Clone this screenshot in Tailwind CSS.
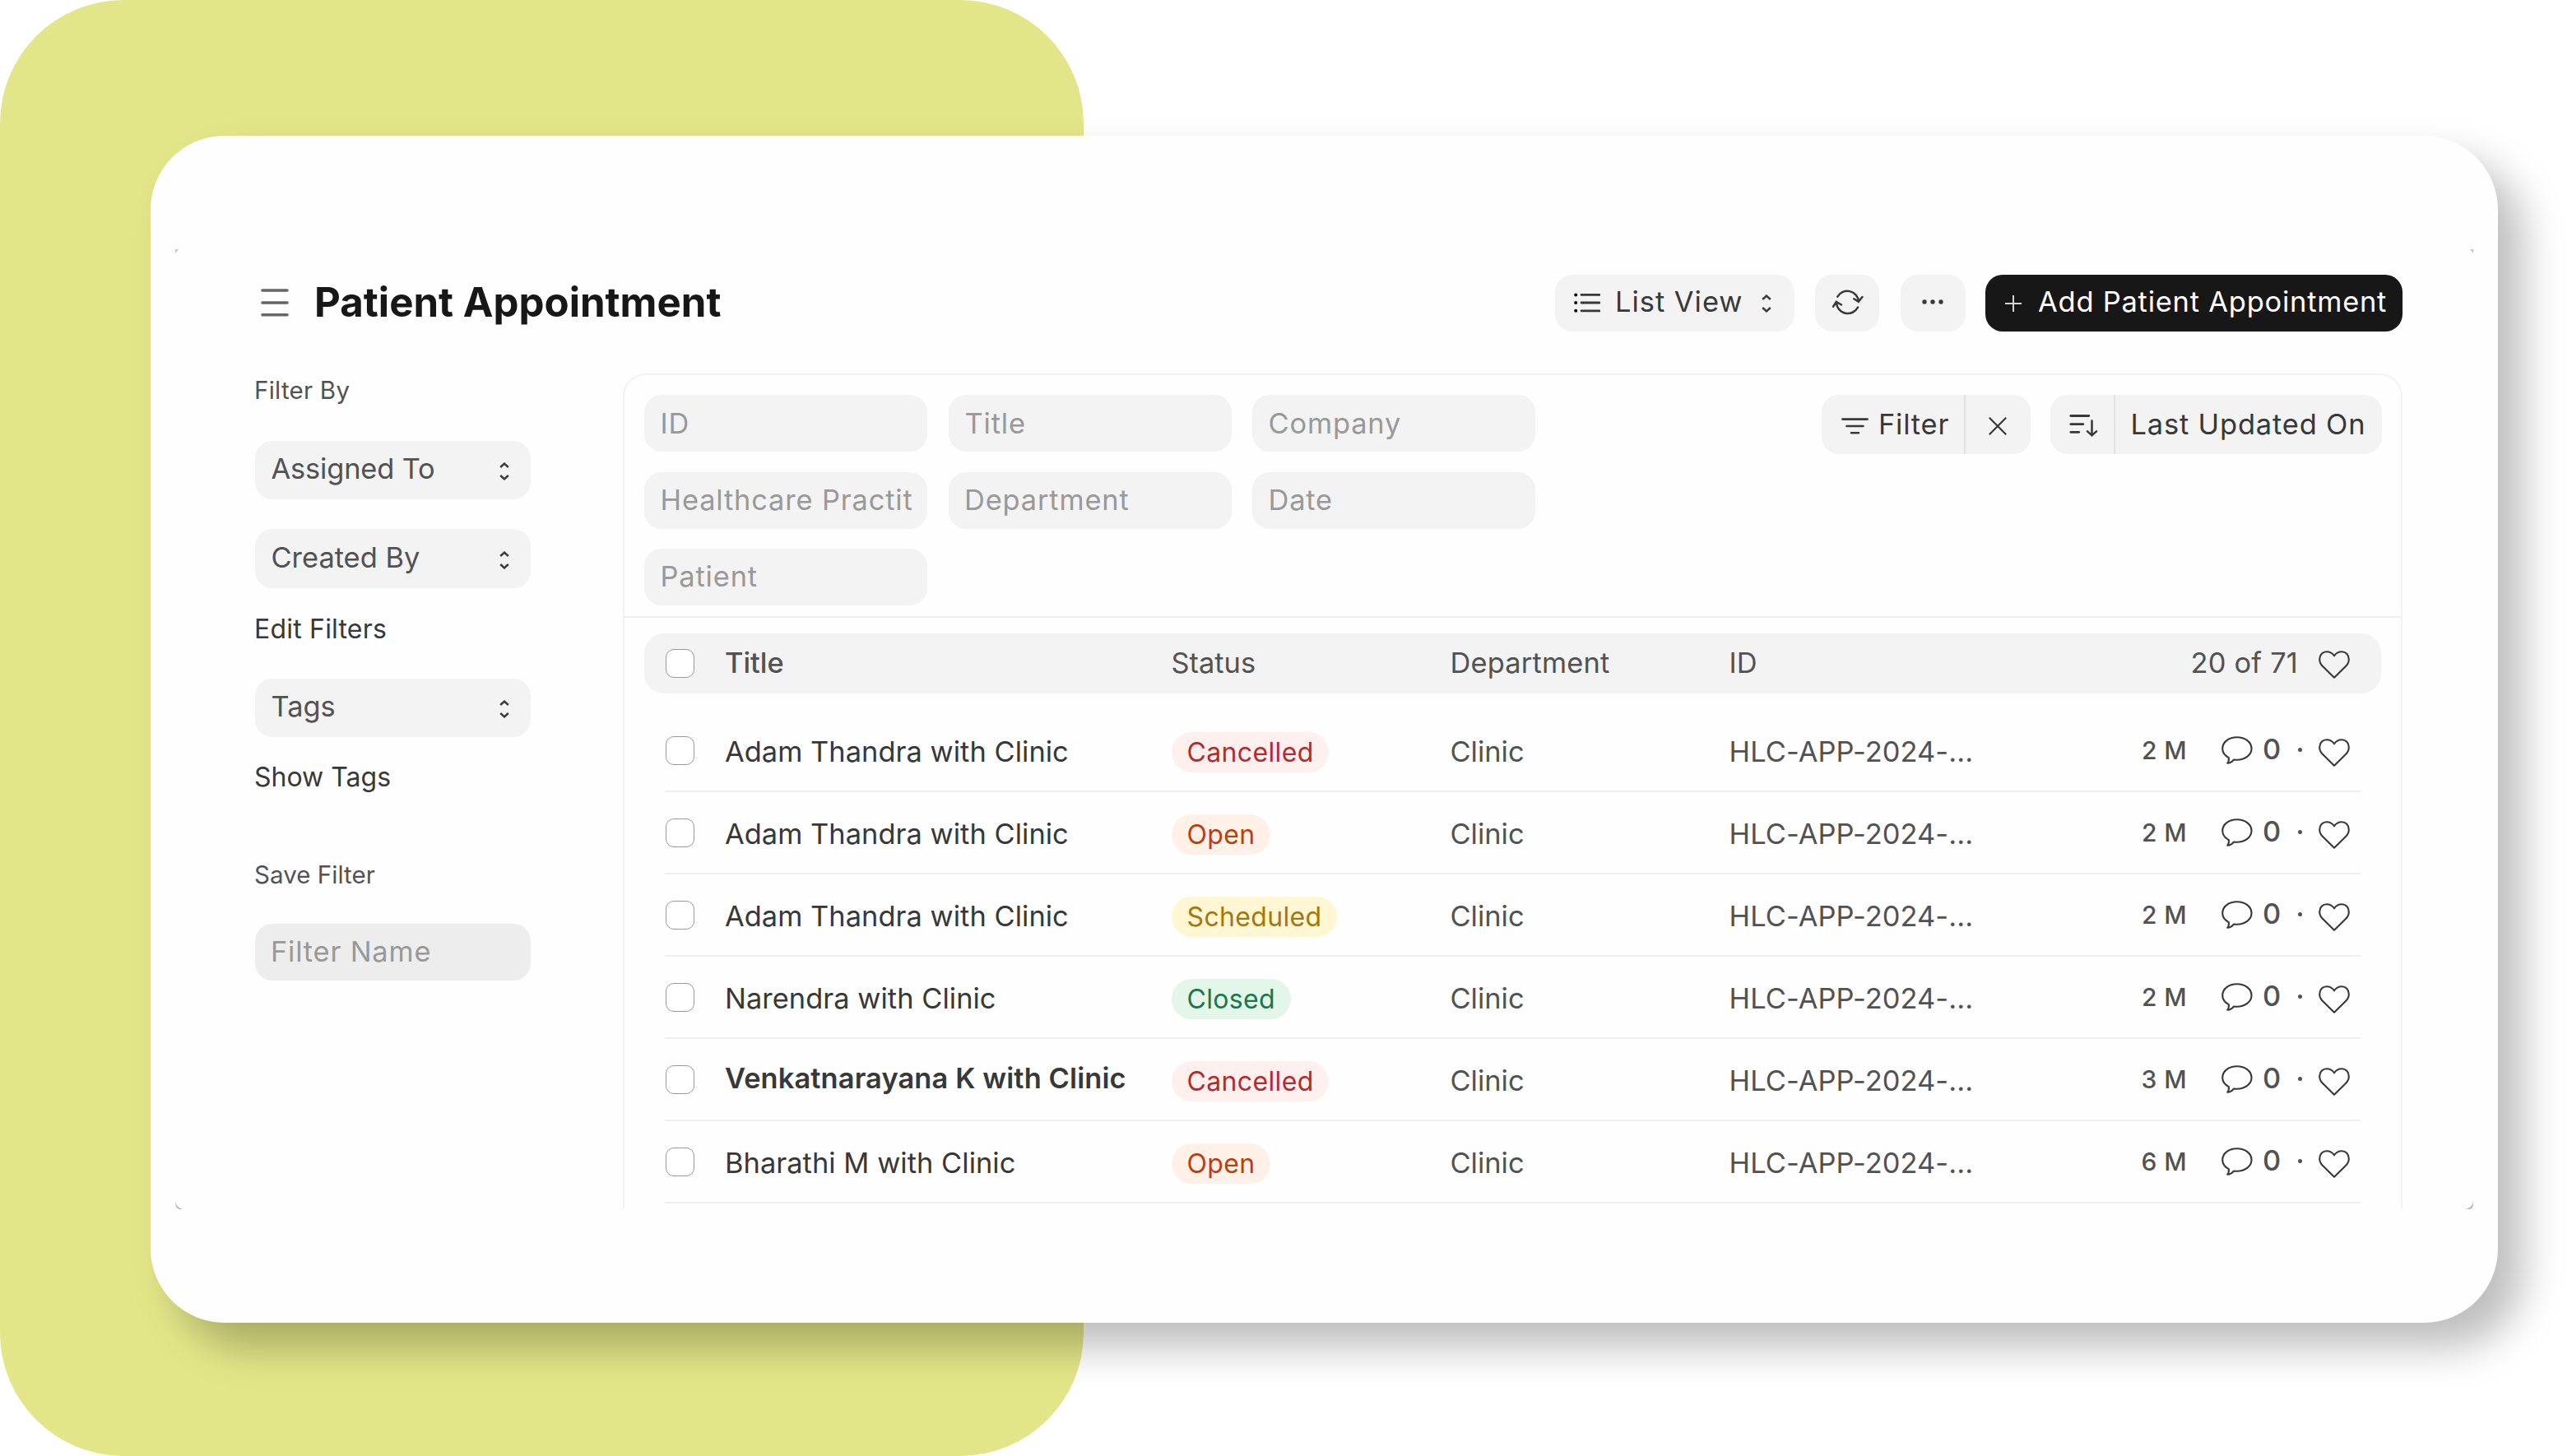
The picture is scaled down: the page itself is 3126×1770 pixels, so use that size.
<!DOCTYPE html>
<html lang="en">
<head>
<meta charset="utf-8">
<title>Patient Appointment</title>
<script src="https://cdn.jsdelivr.net/npm/@tailwindcss/browser@4"></script>
</head>
<body class="bg-white">
<!-- Shared icon symbols -->
<svg class="hidden">
  <symbol id="i-updown" viewBox="0 0 12 22"><path d="M1.2 6 6 1.6 10.8 6M1.2 16 6 20.4 10.8 16" fill="none" stroke="currentColor" stroke-width="2.4"/></symbol>
  <symbol id="i-heart" viewBox="0 0 38 34"><path d="M19 6.3C16.6 2.4 13 1.2 9.8 1.2 5 1.2 1.2 5 1.2 10.5c0 3.4 1.3 6 3.6 8.3L19 32.7l14.2-13.9c2.3-2.3 3.6-4.9 3.6-8.3C36.8 5 33 1.2 28.2 1.2 25 1.2 21.4 2.4 19 6.3Z" fill="none" stroke="currentColor" stroke-width="2.1" stroke-linejoin="round"/></symbol>
  <symbol id="i-comment" viewBox="0 0 38 34"><path d="M8.8 26.2C4 23.5 1.2 19.5 1.2 15 1.2 7 9 1.2 18.800 1.200S36.500 7 36.500 15 28.300 28.800 18.800 28.800c-1.600 0-2.800-.1-4-.2-1.800 2.400-4.300 4-7.600 4.200 1.600-2 2-4.400 1.600-6.600Z" fill="none" stroke="currentColor" stroke-width="2.1" stroke-linejoin="round"/></symbol>
</svg>

<div class="relative h-[1770px] w-[3126px] overflow-hidden font-['Inter',sans-serif] font-normal">
  <div class="absolute left-0 top-0 h-[1770px] w-[1317px] rounded-[150px] bg-[#e3e688]"></div>

  <div class="relative ml-[183px] mt-[165px] h-[1443px] w-[2853px] rounded-[90px] bg-[#fefefe] px-[30px] pt-[138px] shadow-[30px_30px_50px_rgba(0,0,0,0.26)]">
    <div class="relative h-[1167px] w-[2793px] overflow-hidden pl-[96px] pr-[86px] pt-[31px]">
      <!-- Frame corners -->
      <svg class="absolute left-0 top-0 h-[5px] w-[5px]" viewBox="0 0 5 5"><path d="M0 0h4L0 5Z" fill="#c4c4c4"/></svg>
      <svg class="absolute right-0 top-0 h-[5px] w-[5px]" viewBox="0 0 5 5"><path d="M5 0H1l4 5Z" fill="#c4c4c4"/></svg>
      <svg class="absolute bottom-0 left-0 h-[9px] w-[9px]" viewBox="0 0 9 9"><path d="M0 0c1 4 3 7 9 9H5C2 8 0 6 0 0Z" fill="#b8b8b8"/></svg>
      <svg class="absolute bottom-0 right-0 h-[9px] w-[9px]" viewBox="0 0 9 9"><path d="M9 0C8 4 6 7 0 9h5c3-1 4-3 4-9Z" fill="#b8b8b8"/></svg>

      <!-- Page header -->
      <header class="flex h-[69px] items-center">
        <svg class="ml-2 mt-[-2px] h-[34px] w-[34px] text-[#666]" viewBox="0 0 34 34"><path d="M2 2h30M2 17h30M2 31.800h30" stroke="currentColor" stroke-width="3.600" stroke-linecap="round"/></svg>
        <h1 class="ml-[31px] mt-[-3px] whitespace-nowrap text-[49.2px] leading-[60px] font-bold text-[#171717]">Patient Appointment</h1>
        <div class="ml-auto flex h-[69px] text-[34.4px] leading-[40px] text-[#383838]">
          <div class="flex w-[291px] items-center rounded-[21px] bg-[#f3f3f3] pl-[23px]">
            <svg class="mt-[-2px] h-[24px] w-[32px]" viewBox="0 0 32 24"><path d="M9 2.400h22M9 12h22M9 21.800h22" stroke="currentColor" stroke-width="2.800" stroke-linecap="round"/><circle cx="2.200" cy="2.400" r="2"/><circle cx="2.200" cy="12" r="2"/><circle cx="2.200" cy="21.800" r="2"/></svg>
            <span class="ml-[18px] w-[178px] pb-[4px] whitespace-nowrap tracking-[1px]">List View</span>
            <svg class="h-[22px] w-[12px]"><use href="#i-updown"/></svg>
          </div>
          <div class="ml-[25px] flex w-[78px] items-center justify-center rounded-[21px] bg-[#f3f3f3]">
            <svg class="mt-[-3px] ml-[2px] h-[32px] w-[38px]" viewBox="0 0 38 32" fill="none" stroke="currentColor" stroke-width="2.500" stroke-linecap="round"><path d="M6.300 9.700A13.800 13.800 0 0 1 32 15.500M26.300 12.300 31.800 15.800 36.400 10M31.100 22.500A13.800 13.800 0 0 1 5 16.500M1 21.700 4.800 16 11 19.500"/></svg>
          </div>
          <div class="ml-[26px] flex w-[79px] items-center justify-center rounded-[21px] bg-[#f3f3f3] pr-[2px]">
            <svg class="mt-[-3px] h-[6px] w-[26px]" viewBox="0 0 26 6" fill="currentColor"><circle cx="3" cy="3" r="2.700"/><circle cx="13" cy="3" r="2.700"/><circle cx="23" cy="3" r="2.700"/></svg>
          </div>
          <div class="ml-[24px] flex w-[507px] items-center rounded-[21px] bg-[#171717] pl-[23px] text-white">
            <svg class="h-[22px] w-[22px]" viewBox="0 0 22 22"><path d="M11 1v20M1 11h20" stroke="#d4d4d4" stroke-width="2"/></svg>
            <span class="ml-[19px] pb-[4px] whitespace-nowrap tracking-[0.800px]">Add Patient Appointment</span>
          </div>
        </div>
      </header>

      <div class="mt-[51px] flex h-[1016px] items-start">
        <!-- Sidebar filters -->
        <aside class="w-[336px] text-[34.4px] leading-[40px] text-[#525252]">
          <div class="text-[29.5px] tracking-[0.250px]">Filter By</div>
          <div class="ml-[0.500px] mt-[42px] flex h-[71px] items-center justify-between rounded-[21px] bg-[#f3f3f3] pl-[20px] pr-[26px]"><span class="pb-[3px] tracking-[-0.150px]">Assigned To</span><svg class="mt-[2px] h-[22px] w-[12px] text-[#383838]"><use href="#i-updown"/></svg></div>
          <div class="ml-[0.500px] mt-[36px] flex h-[72px] items-center justify-between rounded-[21px] bg-[#f3f3f3] pl-[20px] pr-[26px]"><span class="pb-[2px]">Created By</span><svg class="mt-[4px] h-[22px] w-[12px] text-[#383838]"><use href="#i-updown"/></svg></div>
          <div class="mt-[30px] text-[32px] tracking-[0.200px] text-[#383838]">Edit Filters</div>
          <div class="ml-[0.500px] mt-[40px] flex h-[71px] items-center justify-between rounded-[21px] bg-[#f3f3f3] pl-[20px] pr-[26px]"><span class="pb-[4px]">Tags</span><svg class="mt-[2px] h-[22px] w-[12px] text-[#383838]"><use href="#i-updown"/></svg></div>
          <div class="mt-[29px] text-[32px] text-[#383838]">Show Tags</div>
          <div class="mt-[78px] text-[29.500px] tracking-[0.050px]">Save Filter</div>
          <div class="ml-[0.500px] mt-[40px] flex h-[69px] items-center rounded-[21px] bg-[#ededed] pl-[19.500px] text-[#999]"><span class="pb-px tracking-[0.800px]">Filter Name</span></div>
        </aside>

        <!-- List panel -->
        <main class="ml-[112px] h-[1040px] w-[2163px] rounded-t-[28px] border-2 border-[#f3f3f3] text-[34.4px] leading-[40px]">
          <div class="flex h-[295px] items-start justify-between border-b-2 border-[#f0f0f0] pl-[24px] pr-[23px] pt-[24px]">
            <div class="grid grid-cols-[repeat(3,344px)] auto-rows-[69px] gap-x-[25.5px] gap-y-[24.500px] tracking-[0.850px] text-[#999]">
              <div class="flex items-center rounded-[21px] bg-[#f3f3f3] px-[19.500px]">ID</div>
              <div class="flex items-center rounded-[21px] bg-[#f3f3f3] px-[20px]">Title</div>
              <div class="flex items-center rounded-[21px] bg-[#f3f3f3] px-[19.500px]">Company</div>
              <div class="flex items-center overflow-hidden whitespace-nowrap rounded-[21px] bg-[#f3f3f3] px-[19.500px]">Healthcare Practit</div>
              <div class="flex items-center rounded-[21px] bg-[#f3f3f3] px-[19.500px]">Department</div>
              <div class="flex items-center rounded-[21px] bg-[#f3f3f3] px-[19.500px]">Date</div>
              <div class="flex items-center rounded-[21px] bg-[#f3f3f3] px-[19.500px] pb-[2px]">Patient</div>
            </div>
            <div class="flex h-[72px] gap-[24px] text-[#383838]">
              <div class="flex w-[254px] rounded-[21px] bg-[#f3f3f3]">
                <div class="flex w-[175px] items-center border-r-2 border-[#e2e2e2] pl-[24px]">
                  <svg class="mt-[3px] h-[20px] w-[33px]" viewBox="0 0 33 20"><path d="M1.400 1.600h30.200M6.500 10h20M12 18.200h9" stroke="currentColor" stroke-width="2.600" stroke-linecap="round"/></svg>
                  <span class="ml-[12px] pb-px tracking-[0.800px]">Filter</span>
                </div>
                <div class="flex flex-1 items-center pl-[28px]"><svg class="mt-[3px] h-[22px] w-[22px]" viewBox="0 0 22 22"><path d="m.8.800 20.400 20.400M21.200.800.8 21.200" stroke="currentColor" stroke-width="2.200"/></svg></div>
              </div>
              <div class="flex w-[403px] rounded-[21px] bg-[#f3f3f3]">
                <div class="flex w-[79px] items-center border-r-2 border-[#e2e2e2] pl-[23px]">
                  <svg class="mt-[2px] h-[28px] w-[35px]" viewBox="0 0 35 28" fill="none" stroke="currentColor" stroke-width="2.800" stroke-linecap="round"><path d="M1.800 2.500h22M1.800 12.700h15M1.800 22.300h10"/><path d="M27.500 8.500v17.500M22 21.300l5.500 5 5.500-5" stroke-width="2.500"/></svg>
                </div>
                <span class="flex items-center whitespace-nowrap pb-px pl-[18.500px] tracking-[0.850px]">Last Updated On</span>
              </div>
            </div>
          </div>

          <div class="ml-[24px] mt-[19px] flex h-[73px] w-[2111px] items-center rounded-[24px] bg-[#f3f3f3] pl-[26px] pr-[38px] text-[#525252]">
            <span class="h-[35px] w-[35px] rounded-[10px] border-[1.500px] border-[#999] bg-white"></span>
            <div class="ml-[37px] w-[542.500px] pb-[2px] font-[480]">Title</div>
            <div class="w-[339px] pb-[2px]">Status</div>
            <div class="w-[339px] pb-[2px] tracking-[0.200px]">Department</div>
            <div class="pb-[2px]">ID</div>
            <div class="ml-auto pb-[2px] tracking-[0.200px]">20 of 71</div>
            <svg class="ml-[25px] mt-[2px] h-[34px] w-[38px] text-[#383838]"><use href="#i-heart"/></svg>
          </div>

          <div id="rows" class="ml-[49px] mt-[20px] w-[2061px]"></div>
        </main>
      </div>
    </div>
  </div>
</div>

<script>
  const tones = {
    Cancelled: 'bg-[#fff0f0] text-[#b52a2a]',
    Open: 'bg-[#fff1e7] text-[#bd3e0c]',
    Scheduled: 'bg-[#fff7d3] text-[#a6760b]',
    Closed: 'bg-[#e4f5e9] text-[#16794c]',
  };
  const appointments = [
    ['Adam Thandra with Clinic', 'Cancelled', '2 M'],
    ['Adam Thandra with Clinic', 'Open', '2 M'],
    ['Adam Thandra with Clinic', 'Scheduled', '2 M'],
    ['Narendra with Clinic', 'Closed', '2 M'],
    ['Venkatnarayana K with Clinic', 'Cancelled', '3 M', true],
    ['Bharathi M with Clinic', 'Open', '6 M'],
  ];
  document.getElementById('rows').innerHTML = appointments.map(([title, status, age, unseen]) => `
    <div class="flex h-[100px] items-center border-b-2 border-[#f0f0f0] pr-[13px] text-[#525252]">
      <span class="ml-px h-[35px] w-[35px] rounded-[10px] border-[1.500px] border-[#999] bg-white"></span>
      <div class="${unseen ? 'ml-[37px] w-[543px] whitespace-nowrap pb-[2px] font-semibold tracking-[0.120px] text-[#383838]' : 'ml-[37px] w-[543px] whitespace-nowrap pt-[4px] tracking-[0.040px] text-[#383838]'}">${title}</div>
      <div class="w-[338.500px] pt-[4px]"><span class="inline-flex h-[49px] items-center rounded-full px-[18.500px] pt-px text-[32px] tracking-[0.350px] ${tones[status]}">${status}</span></div>
      <div class="w-[339px] pt-[4px]">Clinic</div>
      <div class="pt-[4px] tracking-[0.080px]">HLC-APP-2024-...</div>
      <div class="ml-auto text-[30px] font-medium tracking-[0.400px]">${age}</div>
      <svg class="ml-[42px] h-[34px] w-[38px] text-[#383838]"><use href="#i-comment"/></svg>
      <span class="ml-[12px] w-[22px] pb-[3px] font-medium">0</span>
      <span class="ml-[21px] mt-[-2px] h-[5px] w-[5px] rounded-full bg-[#525252]"></span>
      <svg class="ml-[20px] mt-[6px] h-[34px] w-[38px] text-[#383838]"><use href="#i-heart"/></svg>
    </div>`).join('');
</script>
</body>
</html>
